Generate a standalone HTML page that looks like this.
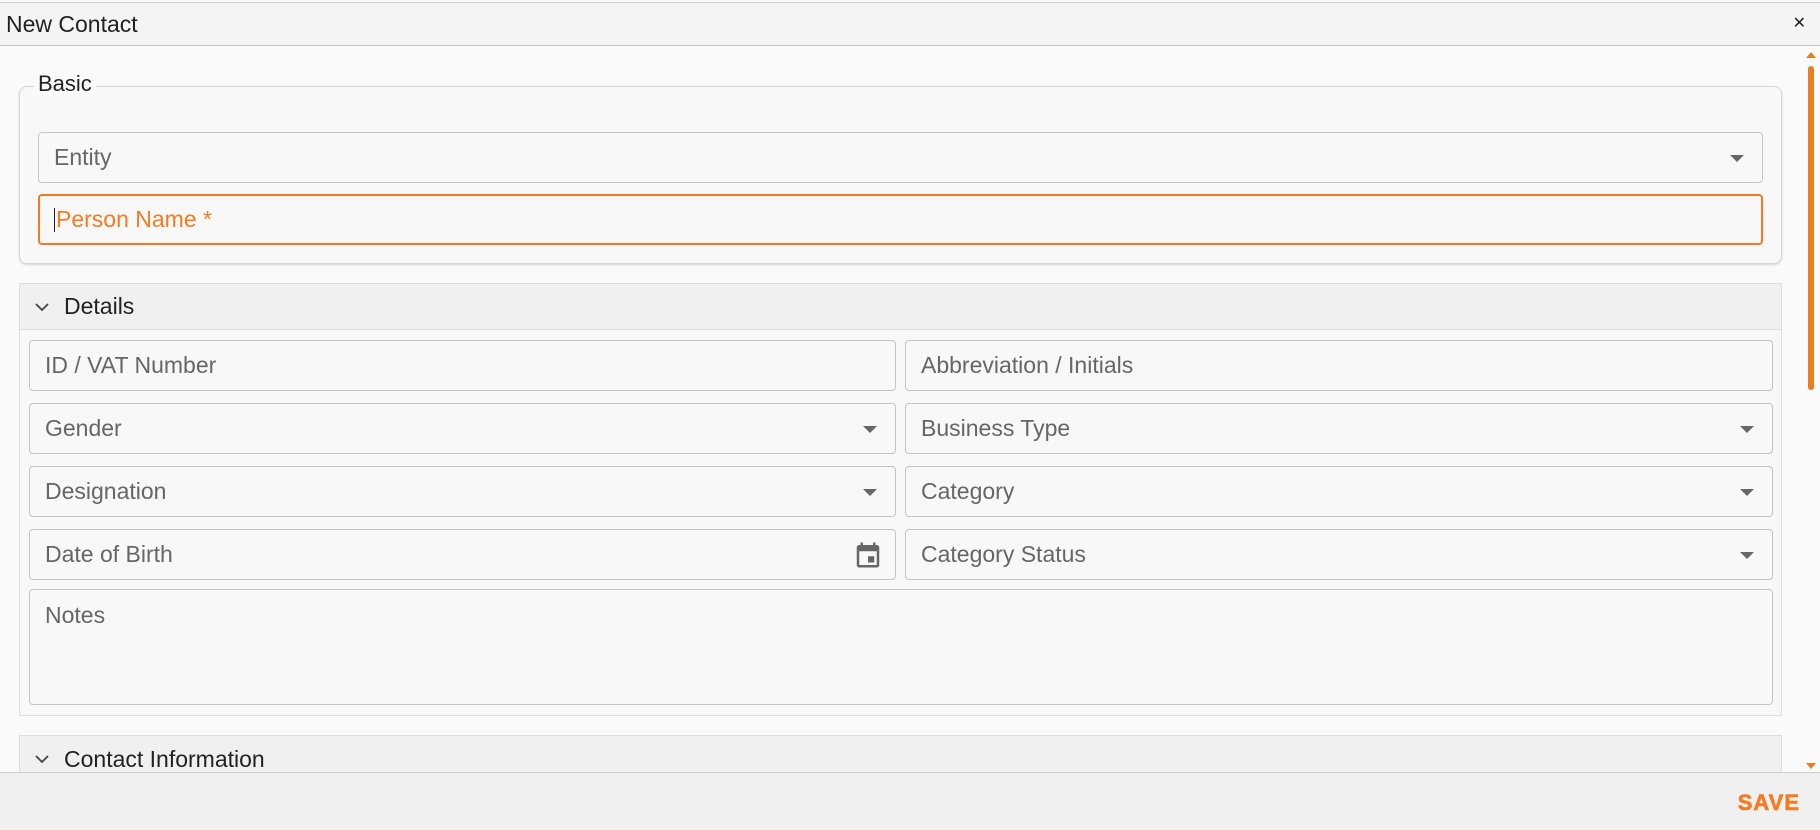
<!DOCTYPE html>
<html><head><meta charset="utf-8"><style>
*{box-sizing:border-box;margin:0;padding:0}
body{width:1820px;height:830px;overflow:hidden;background:#fafafa;font-family:"Liberation Sans",Arial,sans-serif;position:relative}
.abs{position:absolute}
.title{left:0;top:2px;width:1820px;height:44px;background:#f4f4f4;border-top:1px solid #ccc;border-bottom:1px solid #c8c8c8;font-size:23px;color:#222;padding:8px 0 0 6px}
.close{right:14px;top:13px;font-size:16px;color:#222}
.fs{left:19px;top:86px;width:1763px;height:178px;border:1px solid #d8d8d8;border-radius:8px;background:#f8f8f8;box-shadow:0 1px 2px rgba(0,0,0,.15)}
.legend{left:34px;top:71px;background:#fafafa;padding:0 4px;font-size:22px;color:#222}
.f{position:absolute;border:1px solid #c4c4c4;border-radius:4px;background:#f8f8f8;font-size:23px;color:#666;padding-left:15px;display:flex;align-items:center}
.f .ar{position:absolute;right:18px;top:50%;margin-top:-3px;width:0;height:0;border-left:7px solid transparent;border-right:7px solid transparent;border-top:7px solid #666}
.hdr{position:absolute;left:19px;width:1763px;height:47px;background:#f0f0f0;border:1px solid #ddd;font-size:23px;color:#222;display:flex;align-items:center;padding-left:44px}
.hdr svg{position:absolute;left:14px;top:16px}
.body{left:19px;top:330px;width:1763px;height:386px;border:1px solid #ddd;border-top:none;background:#f8f8f8}
.footer{left:0;top:772px;width:1820px;height:58px;background:#f0f0f0;border-top:1px solid #ccc}
.save{right:20px;top:790px;font-size:22px;font-weight:bold;color:#f47b20;letter-spacing:1px;-webkit-text-stroke:0.6px #f47b20}
.sb{left:1808px;top:66px;width:6px;height:324px;background:#e87d22;border-radius:3px}
</style></head><body>
<div class="abs title">New Contact</div>
<div class="abs close">✕</div>
<div class="abs fs"></div>
<div class="abs legend">Basic</div>
<div class="f" style="left:38px;top:132px;width:1725px;height:51px">Entity<span class="ar"></span></div>
<div class="f" style="left:38px;top:194px;width:1725px;height:51px;border:2px solid #f47b20;color:#f47b20;padding-left:14px"><span style="display:inline-block;width:1px;height:24px;background:#222;margin-right:1px"></span>Person Name *</div>
<div class="hdr" style="top:283px"><svg width="16" height="14" viewBox="0 0 16 14"><path d="M2 4l6 6 6-6" fill="none" stroke="#444" stroke-width="1.8"/></svg>Details</div>
<div class="abs body"></div>
<div class="f" style="left:29px;top:340px;width:867px;height:51px">ID / VAT Number</div>
<div class="f" style="left:905px;top:340px;width:868px;height:51px">Abbreviation / Initials</div>
<div class="f" style="left:29px;top:403px;width:867px;height:51px">Gender<span class="ar"></span></div>
<div class="f" style="left:905px;top:403px;width:868px;height:51px">Business Type<span class="ar"></span></div>
<div class="f" style="left:29px;top:466px;width:867px;height:51px">Designation<span class="ar"></span></div>
<div class="f" style="left:905px;top:466px;width:868px;height:51px">Category<span class="ar"></span></div>
<div class="f" style="left:29px;top:529px;width:867px;height:51px">Date of Birth<svg style="position:absolute;right:12px;top:10px" width="30" height="30" viewBox="0 0 24 24"><path fill="#666" d="M19 4h-1V2h-2v2H8V2H6v2H5c-1.1 0-2 .9-2 2v14c0 1.1.9 2 2 2h14c1.1 0 2-.9 2-2V6c0-1.1-.9-2-2-2zm0 16H5V9h14v11zM12 13h5v5h-5z"/></svg></div>
<div class="f" style="left:905px;top:529px;width:868px;height:51px">Category Status<span class="ar"></span></div>
<div class="f" style="left:29px;top:589px;width:1744px;height:116px;align-items:flex-start;padding-top:12px">Notes</div>
<div class="hdr" style="top:735px;height:48px">
<svg width="16" height="14" viewBox="0 0 16 14"><path d="M2 4l6 6 6-6" fill="none" stroke="#444" stroke-width="1.8"/></svg>Contact Information</div>
<div class="abs footer"></div>
<div class="abs save">SAVE</div>
<div class="abs sb"></div>
<div class="abs" style="left:1806px;top:52px;width:0;height:0;border-left:5px solid transparent;border-right:5px solid transparent;border-bottom:6px solid #e87d22"></div>
<div class="abs" style="left:1806px;top:763px;width:0;height:0;border-left:5px solid transparent;border-right:5px solid transparent;border-top:6px solid #e87d22"></div>
</body></html>
